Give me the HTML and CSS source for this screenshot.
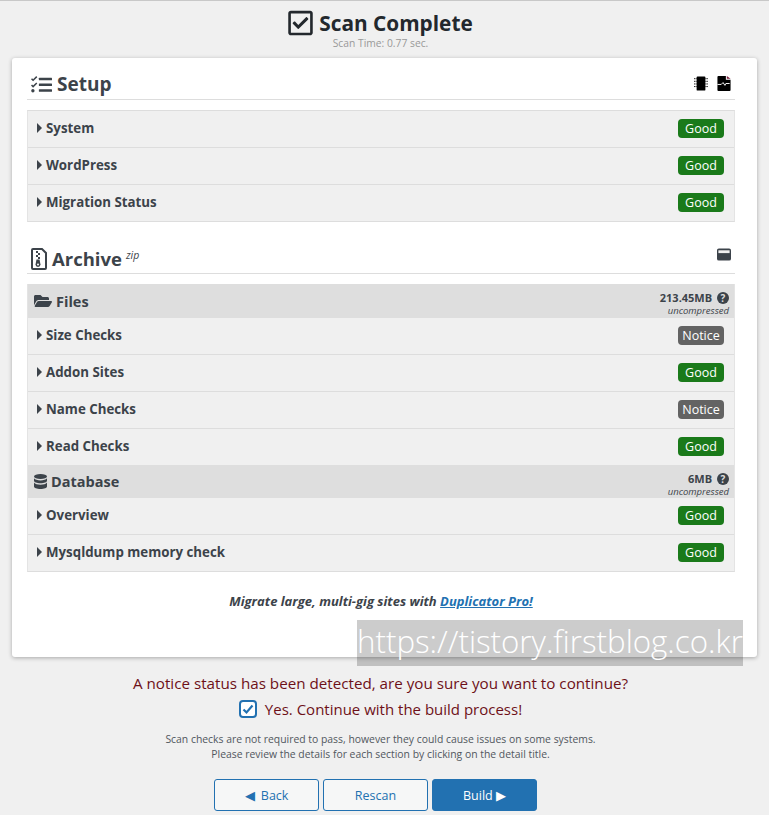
FILE: index.html
```html
<!DOCTYPE html>
<html lang="en">
<head>
  <meta charset="UTF-8" />
  <title>Scan Complete</title>
  <link rel="stylesheet" href="styles.css">
</head>
<body>
  <header class="scan-head">
    <h1>
      <svg class="title-icon" viewBox="0 0 448 512"><path d="M400 32H48C21.49 32 0 53.49 0 80v352c0 26.51 21.49 48 48 48h352c26.51 0 48-21.49 48-48V80c0-26.51-21.49-48-48-48zm0 400H48V80h352v352zm-35.864-241.724L191.547 361.48c-4.705 4.667-12.303 4.637-16.97-.068l-90.781-91.516c-4.667-4.705-4.637-12.303.069-16.971l22.719-22.536c4.705-4.667 12.303-4.637 16.97.069l59.792 60.277 141.352-140.216c4.705-4.667 12.303-4.637 16.97.068l22.536 22.718c4.667 4.706 4.637 12.304-.068 16.971z"/></svg>
      Scan Complete
    </h1>
    <p class="scan-time">Scan Time: 0.77 sec.</p>
  </header>

  <main class="card">
    <div class="section-head setup-head">
      <h2>
        <svg class="setup-icon" viewBox="0 0 20 16"><path d="M0 3l1-1 1 1 3-3 1 1-4 4zM0 9l1-1 1 1 3-3 1 1-4 4z"/><circle cx="1.8" cy="14" r="1.6"/><rect x="7.5" y="1.5" width="12.5" height="2.4" rx=".5"/><rect x="7.5" y="7" width="12.5" height="2.4" rx=".5"/><rect x="7.5" y="12.6" width="12.5" height="2.4" rx=".5"/></svg>
        Setup
      </h2>
      <div class="head-tools">
        <svg class="tool" viewBox="0 0 16 16"><rect x="3" y="0" width="10" height="16" rx="1"/><path d="M0 2.5h3M0 5.5h3M0 8.5h3M0 11.5h3M13 2.5h3M13 5.5h3M13 8.5h3M13 11.5h3" stroke="#000" stroke-width="1" stroke-dasharray="1.5 .5"/></svg>
        <svg class="tool" viewBox="0 0 14 16"><path d="M1 0h8v4h5v11a1 1 0 0 1-1 1H1a1 1 0 0 1-1-1V1a1 1 0 0 1 1-1z"/><path d="M10 0l4 3h-4z" fill="#7a1f3d"/><path d="M0 9h4l2-2 2 3 1-2h4" fill="none" stroke="#fff" stroke-width="1"/></svg>
      </div>
    </div>

    <div class="checks">
      <div class="check-row"><span class="check-name">System</span><span class="badge good">Good</span></div>
      <div class="check-row"><span class="check-name">WordPress</span><span class="badge good">Good</span></div>
      <div class="check-row"><span class="check-name">Migration Status</span><span class="badge good">Good</span></div>
    </div>

    <div class="section-head archive-head">
      <h2>
        <svg class="archive-icon" viewBox="0 0 16 22"><path d="M2 1h9l4 4v15a1 1 0 0 1-1 1H2a1 1 0 0 1-1-1V2a1 1 0 0 1 1-1z" fill="#fff" stroke="#3c434a" stroke-width="2"/><path d="M5 3h2v2H5zM7 5h2v2H7zM5 7h2v2H5zM7 9h2v2H7z"/><path d="M5.5 11.500h3l1 5a2.200 2.200 0 0 1-5 0z"/><circle cx="7" cy="16.500" r="1" fill="#fff"/></svg>
        Archive <sup class="zip">zip</sup>
      </h2>
      <div class="head-tools">
        <svg class="drive" viewBox="0 0 15 13"><rect width="15" height="13" rx="2"/><rect x="1.500" y="2" width="12" height="3" fill="#f0f0f0"/></svg>
      </div>
    </div>

    <div class="checks no-top">
      <div class="group-head files-head">
        <span class="group-name">
          <svg class="folder-icon" viewBox="0 0 576 512"><path d="M572.694 292.093L500.27 416.248A63.997 63.997 0 0 1 444.989 448H45.025c-18.523 0-30.064-20.093-20.731-36.093l72.424-124.155A64 64 0 0 1 152 256h399.964c18.523 0 30.064 20.093 20.730 36.093zM152 224h328v-48c0-26.510-21.490-48-48-48H272l-64-64H48C21.490 64 0 85.490 0 112v278.046l69.077-118.418C86.214 242.250 117.989 224 152 224z"/></svg>
          Files
        </span>
        <span class="group-size"><b>213.45MB <i class="help">?</i></b><em>uncompressed</em></span>
      </div>
      <div class="check-row"><span class="check-name">Size Checks</span><span class="badge notice">Notice</span></div>
      <div class="check-row"><span class="check-name">Addon Sites</span><span class="badge good">Good</span></div>
      <div class="check-row"><span class="check-name">Name Checks</span><span class="badge notice">Notice</span></div>
      <div class="check-row last"><span class="check-name">Read Checks</span><span class="badge good">Good</span></div>

      <div class="group-head db-head">
        <span class="group-name">
          <svg class="db-icon" viewBox="0 0 14 16"><ellipse cx="7" cy="2.600" rx="7" ry="2.600"/><path d="M0 4.500c1 1.600 4 2.300 7 2.300s6-.7 7-2.300v2.800c0 1.500-3 2.700-7 2.700s-7-1.200-7-2.700zM0 9.200c1 1.600 4 2.300 7 2.300s6-.7 7-2.300v4.100c0 1.500-3 2.700-7 2.700s-7-1.200-7-2.700z"/></svg>
          Database
        </span>
        <span class="group-size"><b>6MB <i class="help">?</i></b><em>uncompressed</em></span>
      </div>
      <div class="check-row"><span class="check-name">Overview</span><span class="badge good">Good</span></div>
      <div class="check-row"><span class="check-name">Mysqldump memory check</span><span class="badge good">Good</span></div>
    </div>

    <p class="promo">Migrate large, multi-gig sites with <a href="#">Duplicator Pro!</a></p>
  </main>

  <section class="confirm">
    <p class="confirm-msg">A notice status has been detected, are you sure you want to continue?</p>
    <label class="confirm-check">
      <svg class="checkbox" viewBox="0 0 18 18"><rect x="1" y="1" width="16" height="16" rx="3" fill="#fff" stroke="#2271b1" stroke-width="2"/><path d="M4.500 9.500l3 3 6-7" fill="none" stroke="#2271b1" stroke-width="2.200"/></svg>
      Yes. Continue with the build process!
    </label>
    <p class="confirm-note">Scan checks are not required to pass, however they could cause issues on some systems.<br>Please review the details for each section by clicking on the detail title.</p>
    <div class="actions">
      <button class="btn back">◀ Back</button>
      <button class="btn">Rescan</button>
      <button class="btn primary">Build ▶</button>
    </div>
  </section>

  <div class="watermark">https://tistory.firstblog.co.kr</div>
</body>
</html>
```

FILE: styles.css
```css
* {
  box-sizing: border-box;
}

html, body {
  height: 815px;
  overflow: hidden;
}

body {
  margin: 0;
  position: relative;
  background: #f0f0f0;
  border-top: 1px solid #c8c8c8;
  font-family: "Open Sans", sans-serif;
  color: #3c434a;
}

.scan-head {
  text-align: center;
  height: 57px;
  padding: 8px 8px 0 0;
}

h1 {
  margin: 0;
  display: flex;
  justify-content: center;
  align-items: center;
  gap: 6px;
  height: 28px;
  font-size: 20.8px;
  line-height: 28px;
  font-weight: 700;
  color: #23282d;
}

.title-icon {
  width: 25px;
  height: 28px;
  fill: #23282d;
}

.scan-time {
  margin: -1px 0 0;
  font-size: 10.3px;
  line-height: 14px;
  color: #999;
}

.card {
  margin: 0 12px;
  width: 745px;
  height: 599px;
  padding: 0 22px 0 15px;
  background: #fff;
  border-radius: 3px;
  box-shadow: 0 1px 4px rgba(0,0,0,.3);
}

.section-head {
  display: flex;
  justify-content: space-between;
  align-items: center;
  height: 42px;
  padding-top: 9px;
  border-bottom: 1px solid #ddd;
}

.setup-head {
  margin-bottom: 10px;
}

.archive-head {
  margin: 10px 0;
}

h2 {
  margin: 2px 0 0;
  display: flex;
  align-items: center;
  gap: 5px;
  font-size: 19px;
  font-weight: 700;
  color: #3c434a;
}

.archive-head h2 {
  margin-top: 3px;
  font-size: 18.5px;
}

.setup-icon {
  width: 21px;
  height: 17px;
  margin-left: 4px;
  fill: #3c434a;
}

.archive-icon {
  width: 16px;
  height: 22px;
  margin-left: 4px;
  fill: #3c434a;
}

.zip {
  font-size: 10.5px;
  font-weight: 400;
  font-style: italic;
  align-self: flex-start;
  margin: 3px 0 0 -1px;
  line-height: 12px;
}

.head-tools {
  display: flex;
  gap: 9px;
  padding-right: 4px;
}

.tool {
  width: 14px;
  height: 15px;
  fill: #000;
}

.drive {
  width: 14px;
  height: 13px;
  margin-bottom: 6px;
  fill: #3c434a;
}

.checks {
  background: #f0f0f0;
  border: 1px solid #ddd;
  border-left-color: #e4e4e4;
  border-right-color: #e4e4e4;
}

.no-top {
  border-top: 0;
}

.check-row {
  display: flex;
  justify-content: space-between;
  align-items: center;
  height: 37px;
  padding: 0 10px 1px 9px;
  border-bottom: 1px solid #ddd;
}

.check-row:last-child,
.check-row.last {
  height: 36px;
  border-bottom: 0;
}

.check-name {
  display: flex;
  align-items: center;
  gap: 4px;
  padding-bottom: 1px;
  font-size: 13.3px;
  font-weight: 700;
}

.check-name::before {
  content: "";
  border-left: 5px solid #3c434a;
  border-top: 5px solid transparent;
  border-bottom: 5px solid transparent;
}

.badge {
  width: 46px;
  height: 19px;
  border-radius: 4px;
  color: #fff;
  font-size: 12.5px;
  line-height: 19px;
  text-align: center;
}

.good {
  background: #1a7a1a;
}

.notice {
  background: #636363;
}

.group-head {
  display: flex;
  justify-content: space-between;
  align-items: center;
  background: #dedede;
  padding: 0 5px 0 6px;
}

.files-head {
  height: 34px;
}

.db-head {
  height: 33px;
}

.group-name {
  display: flex;
  align-items: center;
  gap: 4px;
  font-size: 14.5px;
  font-weight: 700;
}

.folder-icon {
  width: 18px;
  height: 16px;
  fill: #3c434a;
}

.db-icon {
  width: 13px;
  height: 15px;
  fill: #3c434a;
}

.group-size {
  display: flex;
  flex-direction: column;
  align-items: flex-end;
  padding-top: 4px;
}

.group-size b {
  font-size: 11px;
  line-height: 15px;
}

.group-size em {
  font-size: 9.5px;
  line-height: 11px;
}

.help {
  display: inline-block;
  width: 12px;
  height: 12px;
  margin-left: 2px;
  border-radius: 50%;
  background: #3c434a;
  color: #dedede;
  font-size: 10px;
  font-style: normal;
  line-height: 12px;
  text-align: center;
  vertical-align: 0;
}

.promo {
  margin: 21px 0 0;
  text-align: center;
  font-size: 13px;
  line-height: 16px;
  font-weight: 700;
  font-style: italic;
}

.promo a {
  color: #2271b1;
}

.confirm {
  text-align: center;
  padding-top: 16px;
}

.confirm-msg {
  margin: 0;
  padding-right: 8px;
  font-size: 15.2px;
  line-height: 20px;
  color: #6e1018;
}

.confirm-check {
  display: flex;
  justify-content: center;
  align-items: center;
  gap: 8px;
  margin-top: 6px;
  padding-right: 8px;
  height: 20px;
  font-size: 15px;
  color: #6e1018;
}

.checkbox {
  width: 18px;
  height: 18px;
}

.confirm-note {
  margin: 13px 0 0;
  padding-right: 8px;
  font-size: 10.4px;
  line-height: 15px;
  color: #50575e;
}

.actions {
  display: flex;
  justify-content: center;
  gap: 4px;
  margin-top: 17px;
  padding-right: 18px;
}

.btn {
  width: 105px;
  height: 32px;
  padding: 0;
  border: 1px solid #2271b1;
  border-radius: 3px;
  background: #f6f7f7;
  color: #2271b1;
  font-family: "Open Sans", sans-serif;
  font-size: 12.5px;
}

.back {
  word-spacing: 3px;
}

.primary {
  background: #2271b1;
  color: #fff;
}

.watermark {
  position: absolute;
  top: 619px;
  left: 357px;
  width: 386px;
  height: 46px;
  background: rgba(0,0,0,.2);
  color: #fff;
  font-size: 31.3px;
  font-weight: 300;
  line-height: 42px;
  white-space: nowrap;
}
```
